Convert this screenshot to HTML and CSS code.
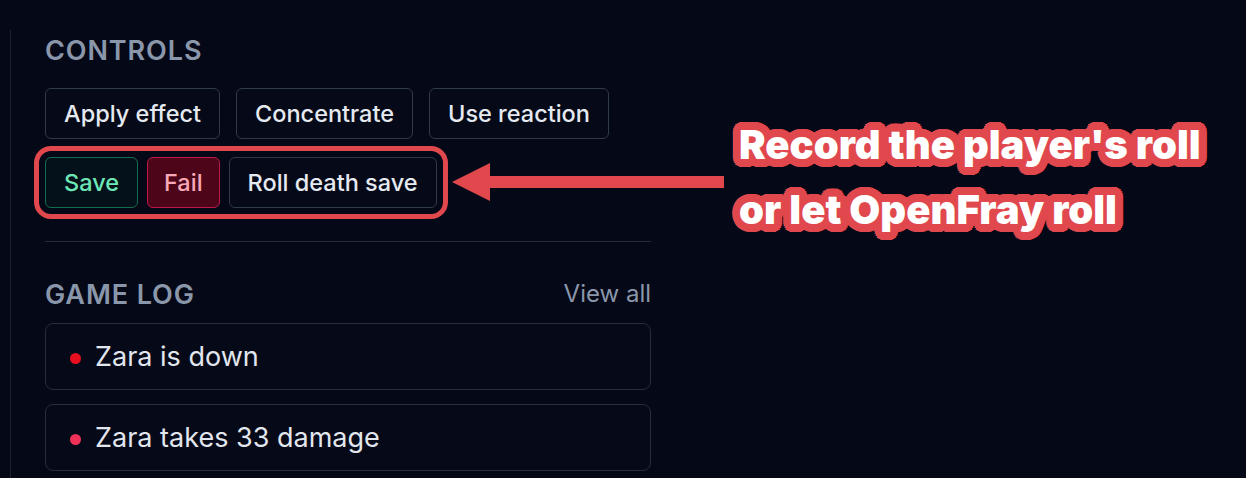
FILE: index.html
```html
<!DOCTYPE html>
<html lang="en">
<head>
<meta charset="utf-8">
<title>OpenFray controls</title>
<link rel="stylesheet" href="styles.css">
</head>
<body>
<div class="stage">
  <aside class="panel">
    <section class="controls">
      <h2 class="section-title">Controls</h2>
      <div class="btn-row">
        <button class="btn">Apply effect</button>
        <button class="btn">Concentrate</button>
        <button class="btn">Use reaction</button>
      </div>
      <div class="btn-row death-row">
        <button class="btn btn-save">Save</button>
        <button class="btn btn-fail">Fail</button>
        <button class="btn">Roll death save</button>
      </div>
    </section>
    <hr class="divider">
    <section class="log">
      <div class="log-head">
        <h2 class="section-title">Game log</h2>
        <a class="view-all" href="#">View all</a>
      </div>
      <ul class="log-list">
        <li class="log-item"><span class="dot dot-down"></span>Zara is down</li>
        <li class="log-item"><span class="dot dot-dmg"></span>Zara takes 33 damage</li>
      </ul>
    </section>
  </aside>

  <svg class="callout-arrow" width="272" height="40" viewBox="0 0 272 40" aria-hidden="true">
    <rect x="34" y="14" width="238" height="12" fill="#e0484d"/>
    <polygon points="0,20 38,1 38,39" fill="#e0484d"/>
  </svg>
  <p class="callout-text">Record the player's roll<br>or let OpenFray roll</p>
</div>
</body>
</html>
```

FILE: styles.css
```css
* { box-sizing: border-box; }

html, body {
  margin: 0;
  height: 100%;
  background: #050816;
  overflow: hidden;
}

body {
  font-family: "Inter", "Liberation Sans", sans-serif;
  color: #e5e9f0;
}

.stage {
  position: relative;
  height: 100%;
  padding: 30px 0 0 10px;
}

.panel {
  width: 641px;
  height: 100%;
  border-left: 1px solid #1b2131;
  padding: 5px 0 0 34px;
}

.section-title {
  margin: 0;
  font-size: 27px;
  line-height: 32px;
  font-weight: 600;
  letter-spacing: 0.9px;
  text-transform: uppercase;
  color: #8a97ab;
}

.btn-row {
  display: flex;
  gap: 16px;
  margin-top: 21px;
}

.btn {
  font-family: inherit;
  font-size: 23.5px;
  line-height: 29px;
  font-weight: 500;
  color: #e5e9f0;
  background: #060a18;
  border: 1px solid #2f3a4c;
  border-radius: 6px;
  padding: 10px 18px;
}

.death-row {
  gap: 9px;
  margin-top: 18px;
  width: max-content;
  border-radius: 6px;
  outline: 5px solid #e0484d;
  outline-offset: 6px;
}

.btn-save {
  color: #6ee7b7;
  border-color: #0f6e4e;
  background: #04101a;
}

.btn-fail {
  color: #f9a8b8;
  border-color: #be1849;
  background: #4c0519;
  padding: 10px 16px;
}

.divider {
  margin: 33px 0 0;
  border: 0;
  border-top: 1px solid #252b3b;
}

.log { margin-top: 37px; }

.log-head {
  display: flex;
  justify-content: space-between;
  align-items: baseline;
}

.view-all {
  font-size: 24px;
  color: #8a97ab;
  text-decoration: none;
  position: relative;
  top: -2px;
}

.log-list {
  list-style: none;
  margin: 12px 0 0;
  padding: 0;
  display: flex;
  flex-direction: column;
  gap: 14px;
}

.log-item {
  display: flex;
  align-items: center;
  gap: 14px;
  height: 67px;
  padding: 0 24px;
  border: 1px solid #262d3d;
  border-radius: 8px;
  background: #060917;
  font-size: 27px;
  color: #e2e6ee;
}

.dot {
  width: 11px;
  height: 11px;
  border-radius: 50%;
  flex: none;
  margin-top: 4px;
}
.dot-down { background: #e8101f; }
.dot-dmg { background: #f0325a; }

.callout-arrow {
  position: absolute;
  left: 452px;
  top: 162px;
}

.callout-text {
  position: absolute;
  left: 739px;
  top: 112px;
  margin: 0;
  font-family: "Inter", "Liberation Sans", sans-serif;
  font-weight: 900;
  font-size: 40px;
  line-height: 65px;
  letter-spacing: 0;
  color: #ffffff;
  white-space: nowrap;
  text-shadow:
    8px 0 #e0484d, -8px 0 #e0484d, 0 8px #e0484d, 0 -8px #e0484d,
    7.7px 2.1px #e0484d, 7.7px -2.1px #e0484d, -7.7px 2.1px #e0484d, -7.7px -2.1px #e0484d,
    2.1px 7.7px #e0484d, -2.1px 7.7px #e0484d, 2.1px -7.7px #e0484d, -2.1px -7.7px #e0484d,
    6.9px 4px #e0484d, 6.9px -4px #e0484d, -6.9px 4px #e0484d, -6.9px -4px #e0484d,
    4px 6.9px #e0484d, -4px 6.9px #e0484d, 4px -6.9px #e0484d, -4px -6.9px #e0484d,
    5.7px 5.7px #e0484d, -5.7px 5.7px #e0484d, 5.7px -5.7px #e0484d, -5.7px -5.7px #e0484d,
    4px 0 #e0484d, -4px 0 #e0484d, 0 4px #e0484d, 0 -4px #e0484d;
}
```
